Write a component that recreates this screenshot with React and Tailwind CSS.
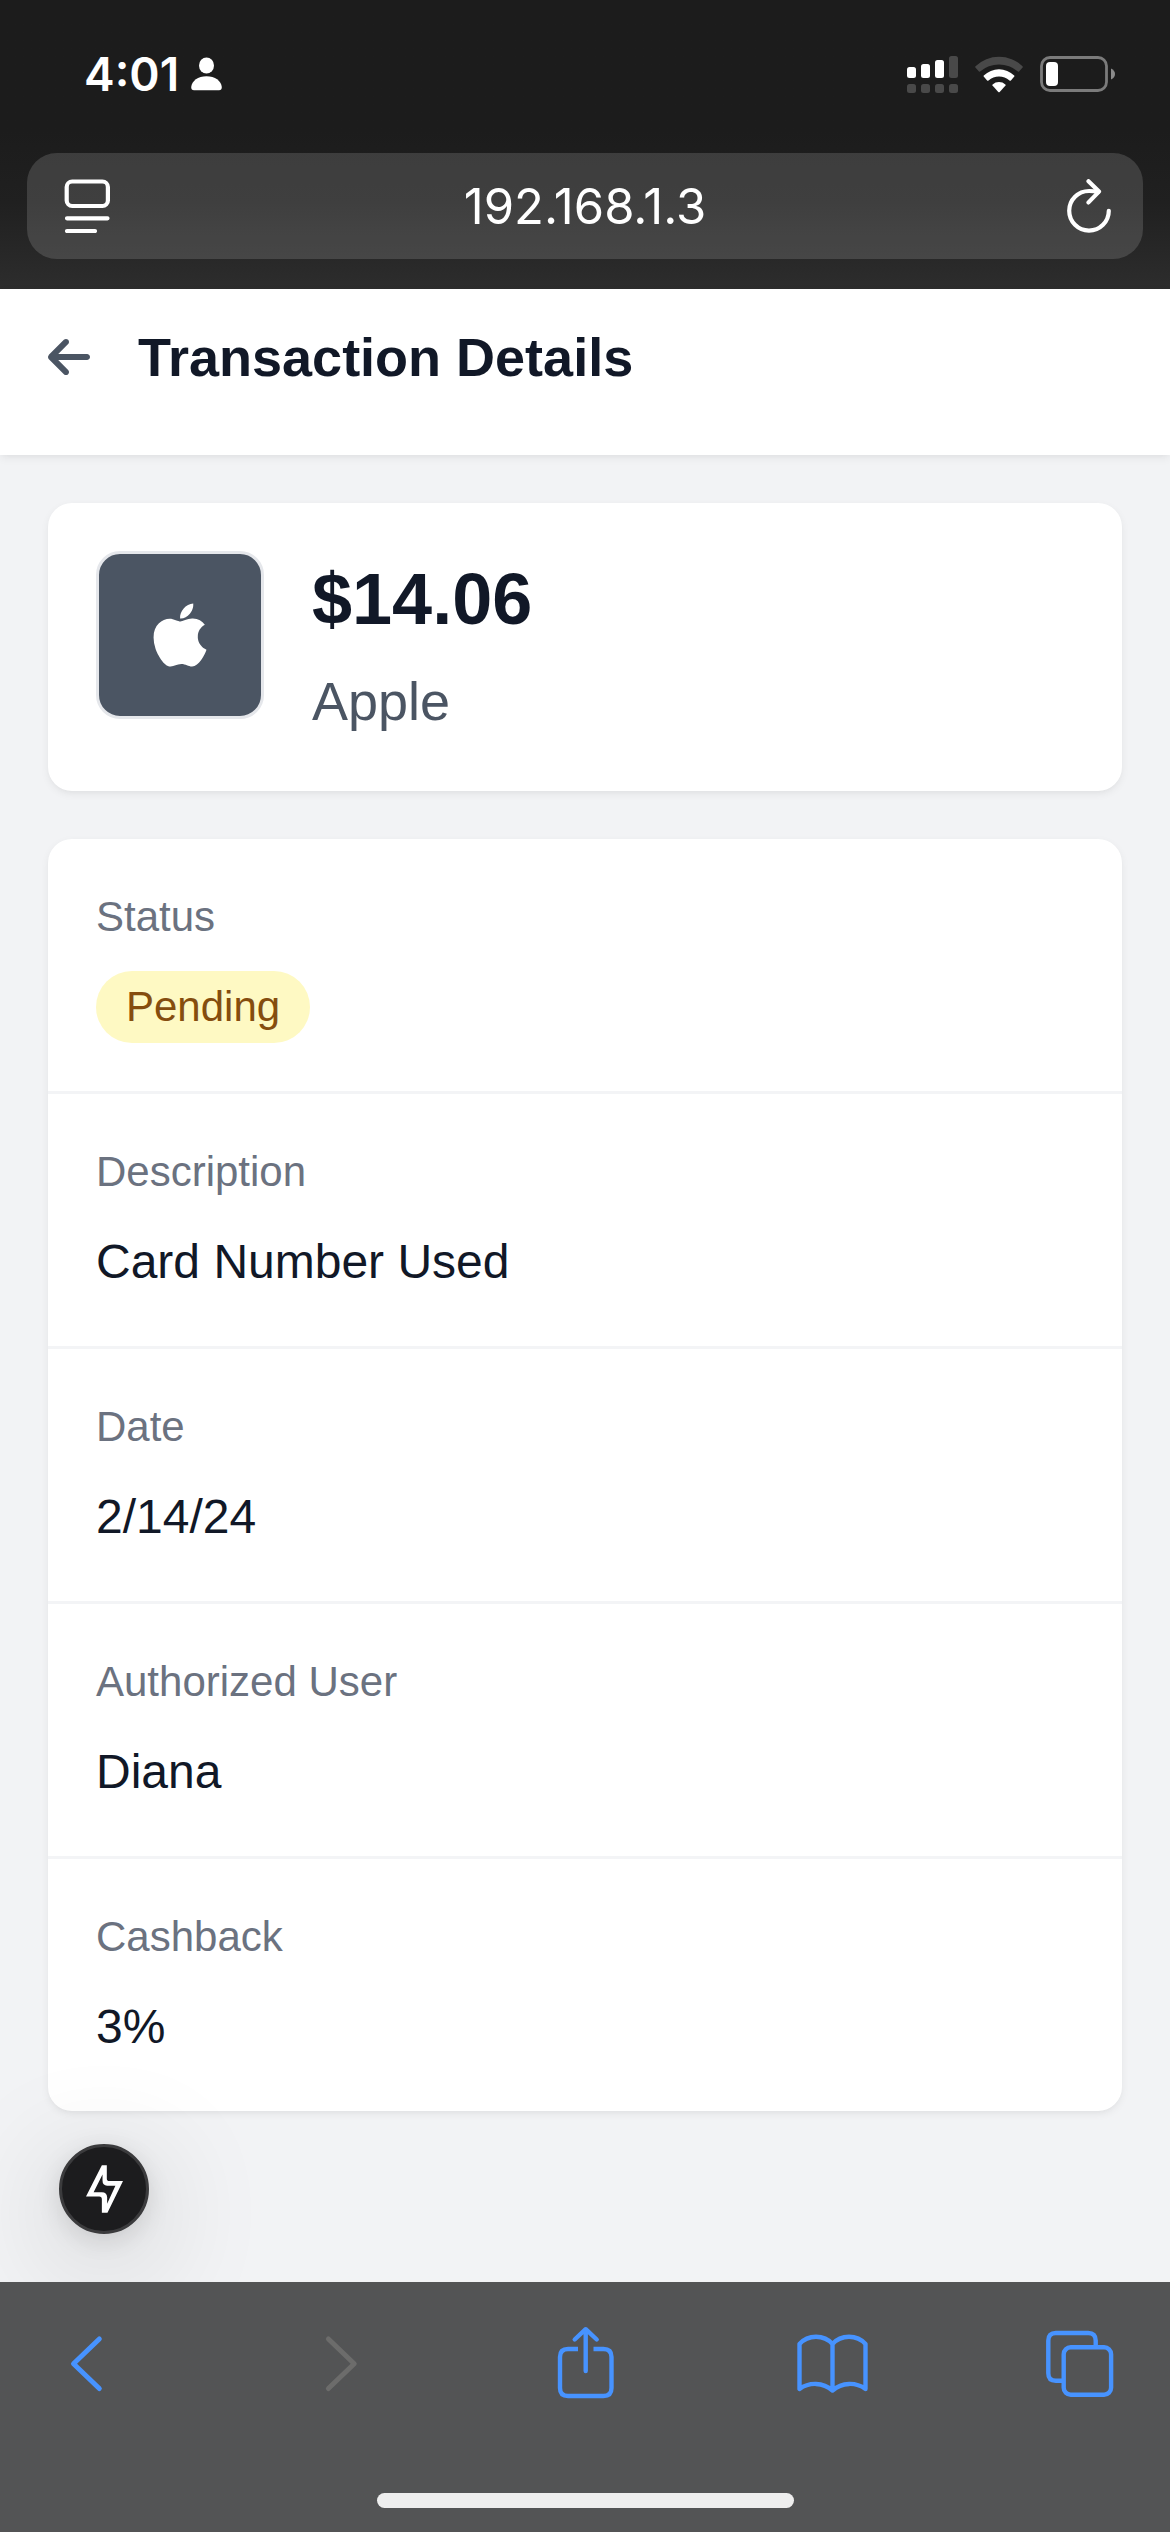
import React from "react";
import { FaApple } from "react-icons/fa";
import { FaArrowLeft } from "react-icons/fa6";

const details = [
  { label: "Status", value: "Pending", badge: true },
  { label: "Description", value: "Card Number Used" },
  { label: "Date", value: "2/14/24" },
  { label: "Authorized User", value: "Diana" },
  { label: "Cashback", value: "3%" },
];

const softShadow =
  "shadow-[0_3px_9px_rgba(0,0,0,0.06),0_3px_6px_-3px_rgba(0,0,0,0.04)]";

function PersonIcon() {
  return (
    <svg className="h-[34px] w-[31px]" viewBox="0 0 31 34" fill="#fff" aria-hidden="true">
      <ellipse cx="15.5" cy="8.5" rx="7.5" ry="8" />
      <path d="M3 33.2Q0.2 33.2 0.2 30C0.8 24 7 19.3 15.5 19.3S30.2 24 30.8 30Q30.8 33.2 28 33.2Z" />
    </svg>
  );
}

function SignalIcon() {
  return (
    <svg className="h-[37px] w-[51px]" viewBox="0 0 51 37" aria-hidden="true">
      <g fill="#fff">
        <rect x="0" y="11" width="9" height="11" rx="2.5" />
        <rect x="14" y="8" width="9" height="14" rx="2.5" />
        <rect x="28" y="4" width="9" height="18" rx="2.5" />
      </g>
      <g fill="#494949">
        <rect x="42" y="0" width="9" height="22" rx="2.5" />
        <rect x="0" y="28" width="9" height="9" rx="2.5" />
        <rect x="14" y="28" width="9" height="9" rx="2.5" />
        <rect x="28" y="28" width="9" height="9" rx="2.5" />
        <rect x="42" y="28" width="9" height="9" rx="2.5" />
      </g>
    </svg>
  );
}

function WifiIcon() {
  return (
    <svg className="h-[37px] w-12" viewBox="0 0 48 37" aria-hidden="true">
      <path
        fill="#494949"
        d="M0.4 11.6Q-0.2 10.9 0.5 10.2A34 34 0 0 1 47.5 10.2Q48.2 10.9 47.6 11.6L44.3 15.3Q43.6 16 42.9 15.4A29 29 0 0 0 5.1 15.4Q4.4 16 3.7 15.3Z"
      />
      <path
        fill="#fff"
        d="M8.7 20.6Q8.2 20 8.8 19.4A22 22 0 0 1 39.2 19.4Q39.8 20 39.3 20.6L35.9 24.4Q35.2 25 34.5 24.4A16.4 16.4 0 0 0 13.5 24.4Q12.8 25 12.1 24.4Z"
      />
      <path
        fill="#fff"
        d="M17.5 29.6Q17 29 17.6 28.4A9.6 9.6 0 0 1 30.4 28.4Q31 29 30.5 29.6L24.7 35.9Q24 36.5 23.3 35.9Z"
      />
    </svg>
  );
}

function BatteryIcon() {
  return (
    <svg className="h-9 w-[75px]" viewBox="0 0 75 36" aria-hidden="true">
      <rect x="1.5" y="1.5" width="65" height="33" rx="8.5" fill="none" stroke="#7b7b7b" strokeWidth="2.8" />
      <rect x="6" y="6" width="12" height="24" rx="4" fill="#fff" />
      <path d="M71 12.5Q75 14.5 75 18T71 23.5Z" fill="#8b8b8b" />
    </svg>
  );
}

function PageMenuIcon() {
  return (
    <svg className="h-[54px] w-[46px]" viewBox="0 0 46 54" fill="none" stroke="#fff" strokeWidth="4.2" strokeLinecap="round" aria-hidden="true">
      <rect x="2.7" y="2.5" width="41.2" height="24.5" rx="5.5" />
      <path d="M3 39.3H43.5M3 52H31" />
    </svg>
  );
}

function ReloadIcon() {
  return (
    <svg className="h-[54px] w-[44px]" viewBox="0 0 44 54" fill="none" stroke="#fff" strokeWidth="4.2" strokeLinecap="round" strokeLinejoin="round" aria-hidden="true">
      <path d="M41.8 31.8A19.8 19.8 0 1 1 22 12Q27 12 31 13.2" />
      <path d="M21.5 2.2L32 12.6L21.5 23.4" />
    </svg>
  );
}

function BoltIcon() {
  return (
    <svg className="h-12 w-[37px]" viewBox="0 0 112 144" fill="#fff" fillRule="evenodd" aria-hidden="true">
      <path d="M48 0H63V40Q63 48 71 48H112L65 144H48V103Q48 95 40 95H0ZM50 28L23 82H48Q63 82 64 97V117L89 62H64Q50 61 50 46Z" />
    </svg>
  );
}

function BrowserIcon({ children, width = 4.4 }) {
  return (
    <svg
      className="h-20 w-24"
      viewBox="0 0 96 80"
      fill="none"
      stroke="currentColor"
      strokeWidth={width}
      strokeLinecap="round"
      strokeLinejoin="round"
      aria-hidden="true"
    >
      {children}
    </svg>
  );
}

function StatusBar() {
  return (
    <div className="flex h-[148px] items-center justify-between pr-[55px] pl-[84px] font-[Inter,sans-serif] text-white">
      <div className="flex items-center gap-3">
        <span className="text-[46px] leading-none font-semibold">4:01</span>
        <PersonIcon />
      </div>
      <div className="flex items-center gap-[17px]">
        <SignalIcon />
        <WifiIcon />
        <BatteryIcon />
      </div>
    </div>
  );
}

function AddressBar() {
  return (
    <div className="mx-[27px] mt-[5px] mb-[30px] flex h-[106px] items-center justify-between rounded-[30px] bg-white/14 px-8">
      <button type="button" aria-label="Page menu" className="flex w-14 justify-center">
        <PageMenuIcon />
      </button>
      <input
        type="text"
        aria-label="Address"
        defaultValue="192.168.1.3"
        className="min-w-0 flex-1 bg-transparent text-center font-[Inter,sans-serif] text-[49px] leading-none text-white outline-none"
      />
      <button type="button" aria-label="Reload" className="flex w-14 justify-end">
        <ReloadIcon />
      </button>
    </div>
  );
}

function DetailRow({ label, value, badge }) {
  return (
    <div className="p-12">
      <dt className="text-[42px] leading-[60px] text-[#6b7280]">{label}</dt>
      <dd className="mt-6 flex text-[48px] leading-[72px] text-[#111827]">
        {badge ? (
          <span className="rounded-full bg-[#fef9c3] px-[30px] text-[42px] text-[#854d0e]">{value}</span>
        ) : (
          value
        )}
      </dd>
    </div>
  );
}

function Toolbar() {
  return (
    <nav aria-label="Browser" className="bg-[#535455] pt-[42px] pb-6">
      <div className="flex justify-between pr-[42px] pl-[39px] text-[#4793ff]">
        <button type="button" aria-label="Back">
          <BrowserIcon width={5}>
            <path d="M60.3 15L34.5 39.7L60.3 64.5" />
          </BrowserIcon>
        </button>
        <button type="button" aria-label="Forward" disabled className="text-[#6c6c6b]">
          <BrowserIcon width={5}>
            <path d="M41.4 15L67.2 39.7L41.4 64.5" />
          </BrowserIcon>
        </button>
        <button type="button" aria-label="Share">
          <BrowserIcon>
            <path strokeLinecap="butt" d="M42 25H32Q24 25 24 33V64Q24 72 32 72H67.5Q75.5 72 75.5 64V33Q75.5 25 67.5 25H57.5" />
            <path d="M49.7 47V5.2M38.7 15.5L49.7 5.2L60.7 15.5" />
          </BrowserIcon>
        </button>
        <button type="button" aria-label="Bookmarks">
          <BrowserIcon>
            <path d="M15.5 65V20C24 10.3 40 10.3 48.5 20C57 10.3 73 10.3 81.5 20V65C72 58 58 58 48.5 66.5C39 58 25 58 15.5 65ZM48.5 20V66" />
          </BrowserIcon>
        </button>
        <button type="button" aria-label="Tabs">
          <BrowserIcon>
            <rect x="31.7" y="23.3" width="47.4" height="47.4" rx="7" />
            <path strokeLinecap="butt" d="M63.7 23V16.5Q63.7 9 56.2 9H23.8Q16.3 9 16.3 16.5V49.2Q16.3 56.7 23.8 56.7H31.5" />
          </BrowserIcon>
        </button>
      </div>
      <div className="mx-auto mt-[89px] h-[15px] w-[417px] rounded-full bg-[#eeeeee]" />
    </nav>
  );
}

export default function App() {
  return (
    <div className="flex min-h-screen flex-col bg-[#f2f3f5] font-['Liberation_Sans',Arial,sans-serif]">
      <div className="bg-linear-to-b from-[#1c1c1c] from-45% via-[#202020] via-70% to-[#2d2d2d]">
        <StatusBar />
        <AddressBar />
      </div>

      <header className={"z-10 flex items-center gap-12 bg-white px-12 pt-[26px] pb-14 " + softShadow}>
        <button type="button" aria-label="Go back">
          <FaArrowLeft className="h-12 w-[42px] text-[#4b5563]" />
        </button>
        <h1 className="text-[54px] leading-[84px] font-bold text-[#111827]">Transaction Details</h1>
      </header>

      <main className="relative flex flex-1 flex-col gap-12 overflow-hidden p-12">
        <section className={"flex gap-12 rounded-3xl bg-white p-12 " + softShadow}>
          <div className="flex size-[168px] items-center justify-center rounded-3xl border-3 border-[#e5e7eb] bg-[#4b5563]">
            <FaApple className="h-[72px] w-[54px] text-white" />
          </div>
          <div>
            <p className="text-[72px] leading-[96px] font-bold text-[#111827]">$14.06</p>
            <p className="mt-3 text-[54px] leading-[84px] text-[#4b5563]">Apple</p>
          </div>
        </section>

        <dl className={"divide-y-3 divide-[#f3f4f6] rounded-3xl bg-white " + softShadow}>
          {details.map((item) => (
            <DetailRow key={item.label} {...item} />
          ))}
        </dl>

        <button
          type="button"
          aria-label="Developer tools"
          className="absolute bottom-12 left-[59px] flex size-[90px] items-center justify-center rounded-full border-3 border-[#3b3b3d] bg-[#1c1c1e] shadow-[0_6px_24px_rgba(0,0,0,0.12),0_24px_120px_rgba(0,0,0,0.22)]"
        >
          <BoltIcon />
        </button>
      </main>

      <Toolbar />
    </div>
  );
}
